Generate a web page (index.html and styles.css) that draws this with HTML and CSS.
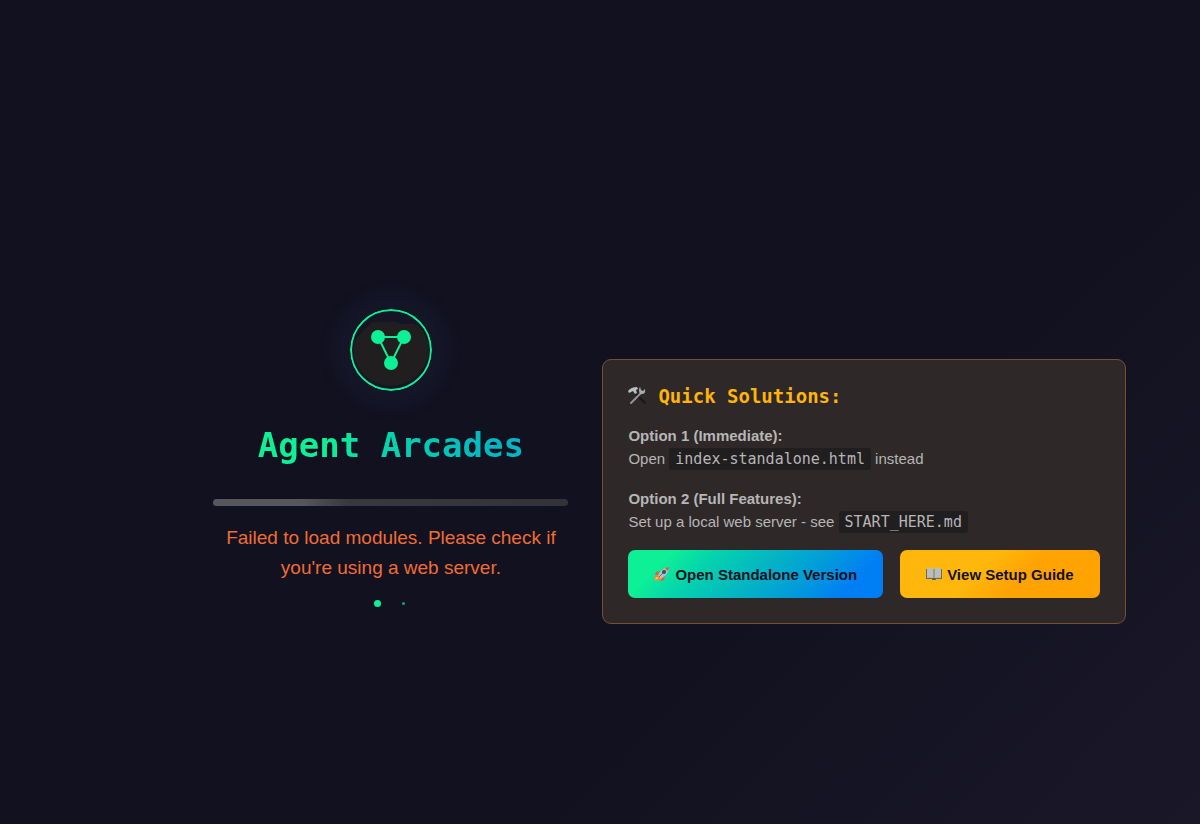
FILE: index.html
```
<!DOCTYPE html>
<html lang="en">
<head>
    <meta charset="utf-8">
    <meta name="viewport" content="width=device-width, initial-scale=1">
    <title>Agent Arcades</title>
    <link rel="stylesheet" href="styles.css">
</head>
<body>
    <main class="loading-screen">
        <section class="loading-content">
            <svg class="logo" viewBox="0 0 82 82" aria-hidden="true">
                <circle cx="41" cy="41" r="40" fill="#151526" stroke="#0ef096" stroke-width="2"/>
                <path d="M7 29Q10 25 16 19L23 13H46L52 15H65L70 18Q77 27 79 39A38 38 0 0 1 5 51Q1 38 7 29Z" fill="#211e20"/>
                <path d="M28 28H54L41 54Z" fill="none" stroke="#0ef096" stroke-width="2"/>
                <circle cx="28" cy="28" r="7" fill="#0ef096"/>
                <circle cx="54" cy="28" r="7" fill="#0ef096"/>
                <circle cx="41" cy="54" r="7" fill="#0ef096"/>
            </svg>
            <h1 class="title">Agent Arcades</h1>
            <div class="progress-bar"></div>
            <p class="message">Failed to load modules. Please check if you're using a web server.</p>
            <div class="dots">
                <span class="dot"></span>
                <span class="dot dot-hidden"></span>
                <span class="dot dot-small"></span>
            </div>
        </section>

        <section class="solutions">
            <h2 class="solutions-title">
                <svg class="tools-icon" viewBox="0 0 20 20" aria-hidden="true">
                    <path d="M8 8L17 17" stroke="#17171a" stroke-width="2" stroke-linecap="round"/>
                    <path d="M3 17L13 7" stroke="#8f9599" stroke-width="2" stroke-linecap="round"/>
                    <path d="M12 8Q10 4 12 1L13 4L15 5L17 3Q18 8 14 8Z" fill="#a5abad"/>
                    <path d="M0 5Q3 1 9 1L10 3L8 4L9 7L7 8L5 5L1 7Z" fill="#b9bebe"/>
                </svg>
                Quick Solutions:
            </h2>
            <p class="option"><strong>Option 1 (Immediate):</strong><br>Open <code>index-standalone.html</code> instead</p>
            <p class="option"><strong>Option 2 (Full Features):</strong><br>Set up a local web server - see <code>START_HERE.md</code></p>
            <div class="actions">
                <button type="button" class="btn btn-primary">
                    <svg class="btn-icon" viewBox="0 0 16 16" aria-hidden="true">
                        <path d="M5 9L1 10L0 15L3 13L4 15L8 13L8 11Z" fill="#ff7d2e"/>
                        <path d="M2 11L1 14L5 12Z" fill="#ffd049"/>
                        <path d="M6 5L2 6L1 9L4 9ZM11 10L10 14L7 15L7 12Z" fill="#e75b38"/>
                        <path d="M4 10Q6 3 15 1Q15 8 7 13Z" fill="#b5bdc5"/>
                        <path d="M11 2L15 1L14 5Z" fill="#e45434"/>
                        <path d="M5 11L12 4" stroke="#687580"/>
                        <circle cx="10" cy="6" r="2" fill="#35505f"/>
                    </svg>
                    Open Standalone Version
                </button>
                <button type="button" class="btn btn-secondary">
                    <svg class="btn-icon" viewBox="0 0 16 16" aria-hidden="true">
                        <path d="M0 3H16V13H10L8 14L6 13H0Z" fill="#686a68"/>
                        <path d="M1 2Q5 1 8 3Q11 1 15 2V12Q11 11 8 13Q5 11 1 12Z" fill="#bdbdb8"/>
                        <path d="M8 3V13" stroke="#777974"/>
                        <path d="M6 13H10" stroke="#343b42"/>
                    </svg>
                    View Setup Guide
                </button>
            </div>
        </section>
    </main>
</body>
</html>
```
FILE: styles.css
```
* {
    box-sizing: border-box;
}

body {
    margin: 0;
    font-family: "Liberation Sans", Arial, sans-serif;
    color: #b7b5b6;
    background: linear-gradient(135deg, #121120 65%, #1a1828);
}

h1, h2, p {
    margin: 0;
}

.loading-screen {
    display: flex;
    justify-content: center;
    align-items: center;
    gap: 34px;
    min-height: 100vh;
    padding: 92px 0 0 139px;
}

/* Left column */
.loading-content {
    display: flex;
    flex-direction: column;
    align-items: center;
    width: 355px;
    text-align: center;
}

.logo {
    width: 82px;
    height: 82px;
    border-radius: 50%;
    box-shadow: 0 0 8px 20px #141526;
}

.title {
    margin-top: 34px;
    font: bold 34px/40px "DejaVu Sans Mono", monospace;
    color: transparent;
    background: linear-gradient(90deg, #0ef096 25%, #04d3ae 50%, #04b5c3 90%);
    -webkit-background-clip: text;
    background-clip: text;
}

.progress-bar {
    width: 100%;
    height: 7px;
    margin-top: 34px;
    border-radius: 4px;
    background: linear-gradient(90deg, #57565c 25%, #38383f 38%, #333238);
}

.message {
    margin-top: 17px;
    font-size: 19px;
    line-height: 30px;
    color: #f06c35;
}

.dots {
    display: flex;
    align-items: center;
    gap: 6px;
    margin-top: 17px;
}

.dot {
    width: 7px;
    height: 7px;
    border-radius: 50%;
    background: #0ef096;
}

.dot-hidden {
    visibility: hidden;
}

.dot-small {
    width: 3px;
    height: 3px;
    margin: 2px;
    background: #10a678;
}

/* Solutions card */
.solutions {
    margin-top: 67px;
    padding: 25px;
    border: 1px solid #75502d;
    border-radius: 9px;
    background: #2e2828;
}

.solutions-title {
    display: flex;
    align-items: center;
    gap: 10px;
    margin-bottom: 17px;
    font: bold 19px/22px "DejaVu Sans Mono", monospace;
    color: #ffb30b;
}

.tools-icon {
    width: 20px;
    height: 20px;
}

.option {
    margin-bottom: 17px;
    font-size: 15px;
    line-height: 23px;
}

.option code {
    padding: 2px 6px;
    border-radius: 3px;
    font: 15px "DejaVu Sans Mono", monospace;
    background: #211e20;
}

.actions {
    display: flex;
    gap: 17px;
}

.btn {
    display: flex;
    align-items: center;
    gap: 5px;
    height: 48px;
    padding: 0 26px;
    border: 0;
    border-radius: 7px;
    font: bold 15px "Liberation Sans", Arial, sans-serif;
    color: #121120;
}

.btn-icon {
    width: 16px;
    height: 16px;
}

.btn-primary {
    background: linear-gradient(135deg, #0ef096 15%, #04d3ae 30%, #04b5c3 50%, #0299dc 70%, #007ff5 85%);
}

.btn-secondary {
    background: linear-gradient(135deg, #ffb70b 40%, #ffa303 60%);
}
```
